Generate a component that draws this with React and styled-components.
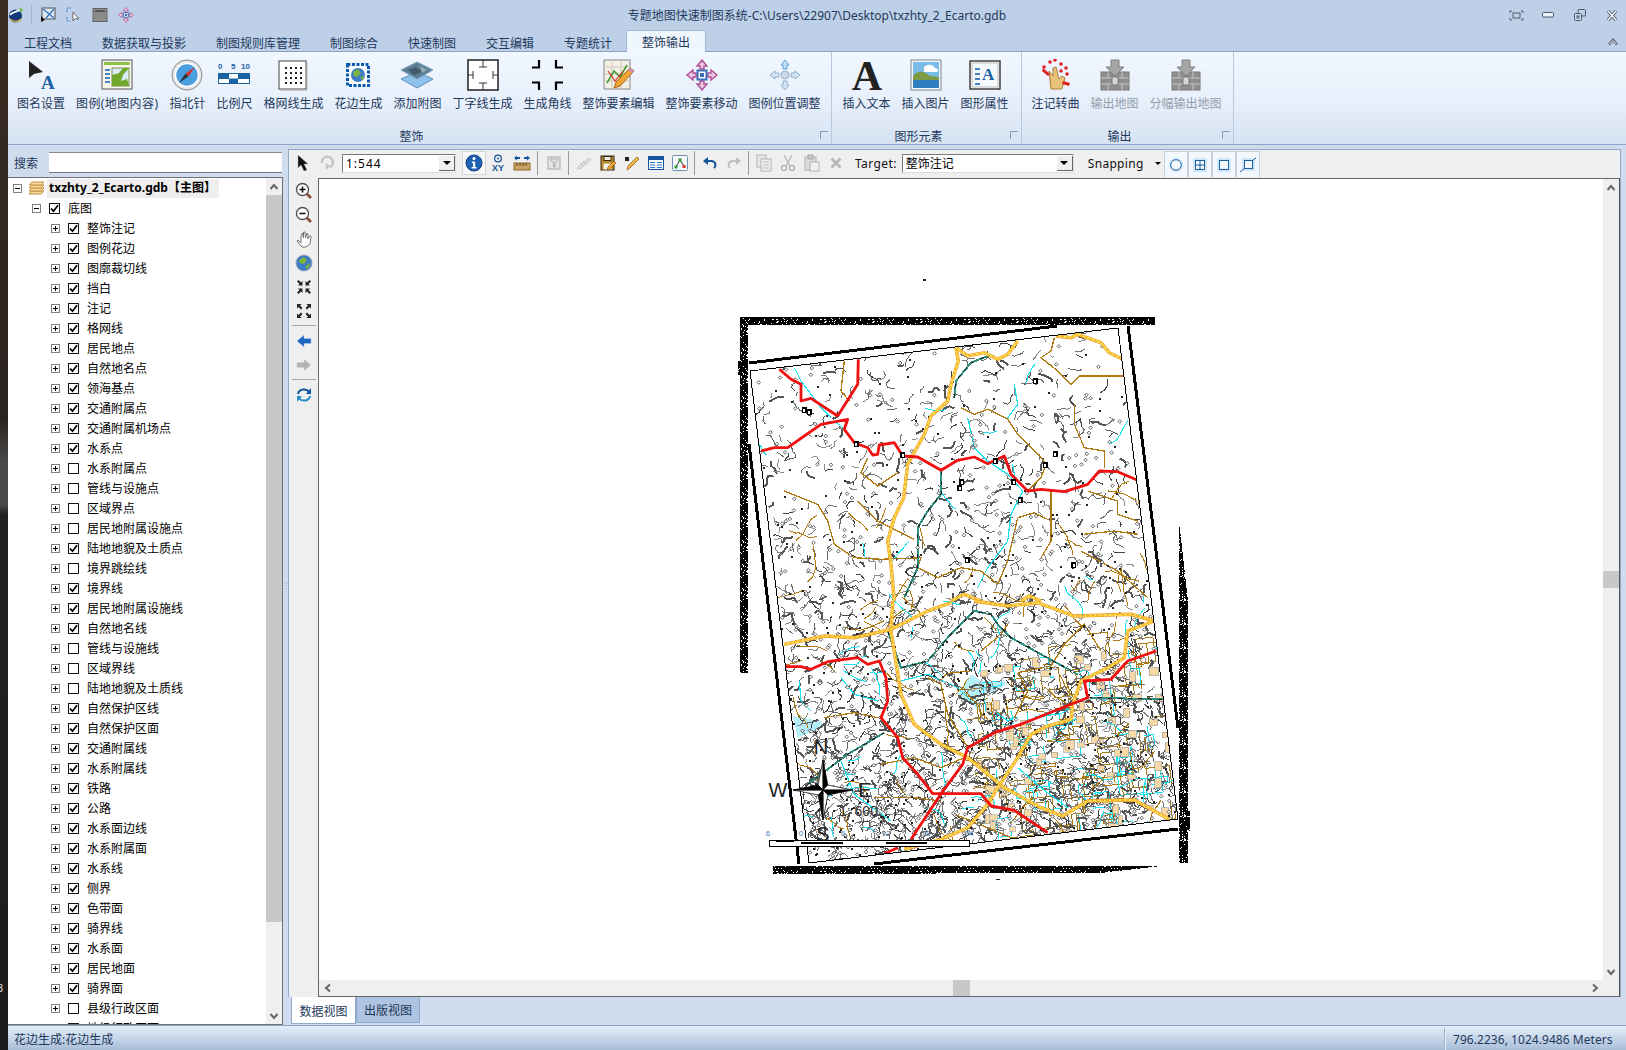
import React, { useMemo } from 'react';
import styled, { createGlobalStyle } from 'styled-components';

const Global = createGlobalStyle`
  html, body { margin: 0; padding: 0; background: #2a2420; }
  body { font-family: "Noto Sans", "Noto Sans CJK SC", sans-serif; font-size: 12px; }
  * { box-sizing: border-box; }
`;

const CJK = `"Noto Sans", "Noto Sans CJK SC", sans-serif`;
const INK = '#1e395b';

const Page = styled.div`
  width: 1626px;
  height: 1050px;
  display: flex;
  overflow: hidden;
`;
const DesktopEdge = styled.div`
  width: 8px;
  flex: none;
  display: flex;
  flex-direction: column;
  justify-content: flex-end;
  overflow: hidden;
  padding-bottom: 56px;
  color: #ddd;
  font-size: 11px;
  line-height: 12px;
  text-indent: -3px;
  background: linear-gradient(180deg, #3a2c22 0, #2a2420 40%, #4a4a4a 44%, #4a4a4a 48%, #222 49%, #1c1c1c 100%);
`;
const Window = styled.div`
  flex: 1;
  min-width: 0;
  display: flex;
  flex-direction: column;
  background: #cfdcee;
  font-family: ${CJK};
`;
const TitleBar = styled.div`
  height: 30px;
  flex: none;
  display: grid;
  grid-template-columns: 1fr auto 1fr;
  align-items: center;
  background: #bdd0e8;
`;
const QuickAccess = styled.div`
  display: flex;
  align-items: center;
`;
const QuickSlot = styled.div`
  width: ${(p) => p.$width || 26}px;
  height: 22px;
  display: flex;
  align-items: center;
  justify-content: center;
`;
const QuickDivider = styled.div`
  width: 1px;
  height: 20px;
  margin: 0 3px 0 7px;
  background: #e8f0fa;
  border-left: 1px solid #9db2cf;
`;
const Title = styled.div`
  color: ${INK};
  font-size: 12px;
  white-space: nowrap;
`;
const WindowButtons = styled.div`
  display: flex;
  justify-content: flex-end;
  margin-right: -2px;
`;
const WindowButton = styled.div`
  width: 32px;
  height: 20px;
  display: flex;
  align-items: center;
  justify-content: center;
`;
const TabStrip = styled.div`
  height: 22px;
  flex: none;
  display: flex;
  align-items: flex-end;
  justify-content: space-between;
  padding: 0 5px 0 1px;
  background: #bdd0e8;
  border-bottom: 1px solid #8ba4c6;
`;
const Tabs = styled.div`
  display: flex;
  align-items: flex-end;
`;
const Tab = styled.div`
  padding: 0 15px;
  height: ${(p) => (p.$active ? '22px' : '21px')};
  line-height: ${(p) => (p.$active ? '23px' : '25px')};
  color: ${INK};
  white-space: nowrap;
  margin-bottom: ${(p) => (p.$active ? '-1px' : '0')};
  background: ${(p) => (p.$active ? '#f0f6fe' : 'transparent')};
  border: 1px solid ${(p) => (p.$active ? '#9fb4d0' : 'transparent')};
  border-bottom: none;
  border-radius: 2px 2px 0 0;
  margin-left: -1px;
  margin-right: -1px;
`;
const Collapse = styled.div`
  width: 16px;
  height: 18px;
  display: flex;
  align-items: center;
  justify-content: center;
`;
const Ribbon = styled.div`
  height: 93px;
  flex: none;
  display: flex;
  background: linear-gradient(180deg, #f1f7ff 0, #e8f0fb 50%, #d6e2f2 100%);
  border-bottom: 1px solid #8ba4c6;
`;
const RibbonGroup = styled.div`
  width: ${(p) => p.$width}px;
  flex: none;
  display: flex;
  flex-direction: column;
  padding-left: ${(p) => p.$pad}px;
  border-right: 1px solid #b8c9df;
`;
const GroupItems = styled.div`
  flex: 1;
  display: flex;
`;
const RibbonItem = styled.div`
  padding: 5px 5.5px 0;
  display: flex;
  flex-direction: column;
  align-items: center;
`;
const RibbonIcon = styled.div`
  height: 38px;
  padding-bottom: 2px;
  display: flex;
  align-items: center;
  justify-content: center;
`;
const RibbonLabel = styled.div`
  line-height: 18px;
  white-space: nowrap;
  color: ${(p) => (p.$disabled ? '#939eab' : INK)};
  letter-spacing: ${(p) => p.$track || 0};
`;
const GroupFooter = styled.div`
  height: 18px;
  margin-left: -${(p) => p.$pad}px;
  padding-right: 16px;
  display: flex;
  align-items: center;
  justify-content: center;
  color: ${INK};
  position: relative;
  top: 1px;
`;
const Launcher = styled.span`
  position: absolute;
  right: 3px;
  top: 4px;
  width: 8px;
  height: 8px;
  border-left: 1px solid #8a9bb3;
  border-top: 1px solid #8a9bb3;
`;
const Workspace = styled.div`
  flex: 1;
  min-height: 0;
  display: flex;
`;
const LeftPanel = styled.div`
  width: 275px;
  flex: none;
  display: flex;
  flex-direction: column;
  padding-top: 4px;
`;
const SearchRow = styled.div`
  height: 28px;
  flex: none;
  display: flex;
  padding: 3px 1px 4px 6px;
  align-items: stretch;
`;
const SearchLabel = styled.div`
  width: 35px;
  line-height: 23px;
  color: ${INK};
`;
const SearchInput = styled.div`
  flex: 1;
  background: #fff;
  border-top: 1px solid #8a8a8a;
  border-bottom: 1px solid #777;
`;
const TreePanel = styled.div`
  flex: 1;
  min-height: 0;
  display: flex;
  background: #fff;
  border: 1px solid #707070;
  border-left: none;
`;
const TreeList = styled.div`
  flex: 1;
  overflow: hidden;
`;
const TreeRow = styled.div`
  height: 20px;
  display: flex;
  align-items: center;
  padding-left: ${(p) => p.$indent}px;
  color: #000;
  white-space: nowrap;
`;
const Expander = styled.span`
  width: 9px;
  height: 9px;
  flex: none;
  border: 1px solid #808080;
  position: relative;
  margin-right: ${(p) => p.$gap}px;
  &::before {
    content: '';
    position: absolute;
    left: 1px;
    top: 3px;
    width: 5px;
    height: 1px;
    background: #000;
  }
  &::after {
    content: '';
    display: ${(p) => (p.$open ? 'none' : 'block')};
    position: absolute;
    left: 3px;
    top: 1px;
    width: 1px;
    height: 5px;
    background: #000;
  }
`;
const CheckBox = styled.span`
  width: 11px;
  height: 11px;
  flex: none;
  border: 1px solid #111;
  margin-right: 8px;
  background: #fff;
  display: flex;
  align-items: center;
  justify-content: center;
`;
const RootLabel = styled.div`
  margin-left: 2px;
  padding: 0 8px 0 2px;
  height: 19px;
  line-height: 18px;
  background: #eeeeee;
  font-weight: 700;
  font-size: 12px;
  width: 172px;
`;
const VBar = styled.div`
  width: 16px;
  flex: none;
  display: flex;
  flex-direction: column;
  background: ${(p) => p.$bg || '#efefef'};
`;
const BarButton = styled.div`
  width: 16px;
  height: 17px;
  flex: none;
  display: flex;
  align-items: center;
  justify-content: center;
  background: #efefef;
`;
const TreeThumb = styled.div`
  height: 727px;
  flex: none;
  background: #c8c8c8;
`;
const BarTrack = styled.div`
  flex: 1;
  display: flex;
  flex-direction: ${(p) => (p.$row ? 'row' : 'column')};
  align-items: center;
  justify-content: center;
`;
const CanvasThumb = styled.div`
  background: #c8c8c8;
  width: ${(p) => (p.$row ? '17px' : '16px')};
  height: ${(p) => (p.$row ? '16px' : '17px')};
`;
const Splitter = styled.div`
  width: 5px;
  flex: none;
  display: flex;
  align-items: center;
  justify-content: center;
  color: #8ea3bf;
  font-size: 8px;
  line-height: 4px;
  text-align: center;
`;
const MainColumn = styled.div`
  width: 1333px;
  flex: none;
  display: flex;
  flex-direction: column;
  padding-top: 4px;
`;
const MainPanel = styled.div`
  flex: 1;
  min-height: 0;
  display: flex;
  flex-direction: column;
  background: #efefef;
  border: 1px solid #8fa9cc;
  border-bottom: none;
`;
const ToolRow = styled.div`
  height: 28px;
  flex: none;
  display: flex;
  align-items: center;
  padding: 0 0 2px 2px;
`;
const ToolSlot = styled.div`
  width: 24px;
  height: 24px;
  flex: none;
  display: flex;
  align-items: center;
  justify-content: center;
  ${(p) => p.$active && 'background: #f8f8f8; border: 1px solid #d6d6d6;'}
`;
const ToolSep = styled.div`
  width: 1px;
  height: 24px;
  flex: none;
  margin: 0 ${(p) => p.$after || 2.5}px 0 2.5px;
  background: #9a9a9a;
`;
const Combo = styled.div`
  width: ${(p) => p.$width}px;
  height: 19px;
  flex: none;
  margin: ${(p) => p.$margin};
  display: flex;
  align-items: center;
  background: #fff;
  color: #000;
  border: 1px solid #7a7a7a;
  border-bottom-color: #ddd;
  border-right-color: #ddd;
  padding-left: 3px;
  letter-spacing: ${(p) => p.$track || 0};
`;
const ComboText = styled.span`
  flex: 1;
`;
const ComboArrow = styled.span`
  width: 16px;
  height: 15px;
  flex: none;
  background: #efefef;
  border-right: 1px solid #666;
  border-bottom: 1px solid #666;
  display: flex;
  align-items: center;
  justify-content: center;
  &::after {
    content: '';
    border-left: 4px solid transparent;
    border-right: 4px solid transparent;
    border-top: 4px solid #000;
  }
`;
const ToolText = styled.div`
  color: #111;
  white-space: nowrap;
  margin: ${(p) => p.$margin};
  font-size: ${(p) => p.$size || 12}px;
  letter-spacing: ${(p) => p.$track || 0};
`;
const DropCaret = styled.span`
  margin: 0 3px 0 11px;
  border-left: 3px solid transparent;
  border-right: 3px solid transparent;
  border-top: 3px solid #000;
`;
const SnapButton = styled.div`
  width: 24px;
  height: 26px;
  flex: none;
  margin-bottom: -2px;
  display: flex;
  align-items: center;
  justify-content: center;
  background: #f3f8fd;
  border: 1px solid #c6cfda;
  border-bottom: none;
`;
const MainBody = styled.div`
  flex: 1;
  min-height: 0;
  display: flex;
`;
const SideTools = styled.div`
  width: 29px;
  flex: none;
  display: flex;
  flex-direction: column;
  align-items: center;
  padding-top: 1px;
`;
const SideSep = styled.div`
  width: 24px;
  height: 1px;
  flex: none;
  margin: 2px 0 3px;
  background: #a8a8a8;
`;
const Canvas = styled.div`
  flex: 1;
  min-width: 0;
  display: flex;
  flex-direction: column;
  border: 1px solid #666;
  border-right-color: #555;
  background: #fff;
`;
const CanvasRow = styled.div`
  flex: 1;
  min-height: 0;
  display: flex;
`;
const MapArea = styled.div`
  flex: 1;
  min-width: 0;
  overflow: hidden;
  background: #fff;
`;
const HBar = styled.div`
  height: 16px;
  flex: none;
  display: flex;
  align-items: center;
  background: #efefef;
`;
const HBarButton = styled.div`
  width: 17px;
  height: 16px;
  flex: none;
  display: flex;
  align-items: center;
  justify-content: center;
`;
const HBarCorner = styled.div`
  width: 16px;
  flex: none;
`;
const ViewTabs = styled.div`
  height: 28px;
  flex: none;
  display: flex;
  align-items: flex-start;
  padding-left: 3px;
`;
const ViewTab = styled.div`
  height: ${(p) => (p.$active ? '27px' : '26px')};
  line-height: ${(p) => (p.$active ? '29px' : '27px')};
  padding: 0 ${(p) => (p.$active ? '7.5px' : '7px')};
  color: ${INK};
  background: ${(p) => (p.$active ? '#fff' : '#aec4e0')};
  border: 1px solid #8fa9cc;
  border-top: none;
  white-space: nowrap;
`;
const StatusBar = styled.div`
  height: 25px;
  flex: none;
  display: flex;
  align-items: center;
  justify-content: space-between;
  padding: 2px 0 0 6px;
  color: ${INK};
  background: linear-gradient(180deg, #e4edf8 0, #d3e0f0 30%, #a9bed9 100%);
  border-top: 1px solid #8ba4c6;
`;
const StatusRight = styled.div`
  display: flex;
  align-items: center;
  height: 100%;
  width: 182px;
  padding-left: 8px;
  border-left: 1px solid #9fb3cd;
  box-shadow: inset 1px 0 0 #e6eef8;
  white-space: nowrap;
  letter-spacing: 0.05px;
`;

/* ---- small icons ---- */
const Chevron = ({ dir = 'up', color = '#666', size = 10 }) => {
  const r = { up: 0, right: 90, down: 180, left: 270 }[dir];
  return (
    <svg width={size} height={size} viewBox="0 0 10 10">
      <path d="M1.5 7 L5 3 L8.5 7" fill="none" stroke={color} strokeWidth="2" transform={`rotate(${r} 5 5)`} />
    </svg>
  );
};
const Tick = () => (
  <svg width="9" height="9" viewBox="0 0 9 9">
    <path d="M1 4.5 L3.5 7.2 L8 1.2" fill="none" stroke="#000" strokeWidth="1.7" />
  </svg>
);
const LogoIcon = () => (
  <svg width="16" height="16" viewBox="0 0 16 16">
    <circle cx="7.5" cy="9" r="6.5" fill="#123a7a" />
    <path d="M2 8 C5 4 10 5 14 2" stroke="#fff" strokeWidth="1.6" fill="none" />
    <path d="M11 1 L15 2 L13 6 Z" fill="#6cb33f" />
    <path d="M2 12 C6 15 10 15 13 12" stroke="#e2b04a" strokeWidth="1.3" fill="none" />
  </svg>
);
const QaMapIcon = () => (
  <svg width="16" height="16" viewBox="0 0 16 16">
    <rect x="2" y="1" width="13" height="11" fill="#dfe6ee" stroke="#555" />
    <path d="M3 2 L14 11 M14 2 L6 11" stroke="#3b79c4" strokeWidth="1.4" />
    <path d="M1 9 L1 15 L5 13 Z" fill="#111" />
  </svg>
);
const QaSelectIcon = () => (
  <svg width="16" height="16" viewBox="0 0 16 16">
    <path d="M1 5 V1 H5 M1 10 V14 H4" stroke="#3b79c4" fill="none" strokeDasharray="2 1" />
    <path d="M7 5 L7 14 L9.5 11.5 L13 12 Z" fill="#fff" stroke="#666" />
  </svg>
);
const QaWindowIcon = () => (
  <svg width="16" height="16" viewBox="0 0 16 16">
    <rect x="1" y="1.5" width="14" height="13" fill="#8c8c8c" stroke="#666" />
    <rect x="3" y="3" width="10" height="2" fill="#555" />
  </svg>
);
const QaMoveIcon = () => <MoveArrows size={16} fill="#b04f97" center="#3a6db5" />;
const WinFocus = () => (
  <svg width="15" height="11" viewBox="0 0 15 11">
    <rect x="4" y="3" width="7" height="5" fill="none" stroke="#555d70" />
    <path d="M1 3 V1 H3 M12 1 H14 V3 M14 8 V10 H12 M3 10 H1 V8" fill="none" stroke="#555d70" />
  </svg>
);
const WinMin = () => (
  <svg width="12" height="6" viewBox="0 0 12 6">
    <rect x="0.5" y="0.5" width="11" height="4.5" rx="1" fill="#eef3fa" stroke="#4f5a6e" />
  </svg>
);
const WinRestore = () => (
  <svg width="12" height="12" viewBox="0 0 12 12">
    <rect x="4" y="0.5" width="7.5" height="6.5" rx="1" fill="none" stroke="#4f5a6e" />
    <rect x="0.5" y="4.5" width="7" height="7" rx="1" fill="#c6d6ec" stroke="#4f5a6e" />
    <rect x="3" y="7" width="2" height="2" fill="none" stroke="#4f5a6e" />
  </svg>
);
const WinClose = () => (
  <svg width="12" height="11" viewBox="0 0 12 11">
    <path d="M2 1 L10 10 M10 1 L2 10" stroke="#4f5a6e" strokeWidth="3.2" />
    <path d="M2 1 L10 10 M10 1 L2 10" stroke="#f5f8fc" strokeWidth="1.4" />
  </svg>
);
const CollapseIcon = () => (
  <svg width="10" height="8" viewBox="0 0 10 8">
    <path d="M1 6.5 L5 2 L9 6.5" fill="none" stroke="#4f5a6e" strokeWidth="2.6" />
    <path d="M1.5 6 L5 2.4 L8.5 6" fill="none" stroke="#fff" strokeWidth="1" />
  </svg>
);
const LayersSmall = () => (
  <svg width="17" height="14" viewBox="0 0 17 14">
    {[9, 6, 3, 0].map((o) => (
      <path key={o} d={`M4 ${o + 1} H16 L13 ${o + 4} H1 Z`} fill="#f3d9a0" stroke="#c58f3c" />
    ))}
  </svg>
);

/* ribbon icons */
const NameIcon = () => (
  <svg width="32" height="32" viewBox="0 0 32 32">
    <path d="M4 2 L4 19 L9 15 L18 13 Z" fill="#222" />
    <text x="16" y="30" fontFamily="Liberation Serif" fontWeight="700" fontSize="19" fill="#1a63a3">A</text>
  </svg>
);
const LegendIcon = () => (
  <svg width="32" height="32" viewBox="0 0 32 32">
    <rect x="1" y="1" width="30" height="29" fill="#f8f6ea" stroke="#555" />
    <rect x="3" y="3" width="26" height="3" fill="#8bc34a" />
    <rect x="11" y="9" width="17" height="18" fill="#dcecf6" stroke="#7b8b55" />
    <path d="M11 27 V16 L18 14 L22 9 H28 L22 16 L20 22 L26 20 L28 27 Z" fill="#70a82e" />
    {[10, 14, 18, 22].map((y) => <rect key={y} x="4" y={y} width="5" height="2" fill="#3f83c9" />)}
  </svg>
);
const CompassIcon = () => (
  <svg width="32" height="32" viewBox="0 0 32 32">
    <circle cx="16" cy="16" r="15" fill="#e7e7e7" stroke="#8a8a8a" />
    <circle cx="16" cy="16" r="11.5" fill="#4a9fe0" stroke="#fff" strokeWidth="1.5" />
    <path d="M24 8 L17.5 17.5 L14.5 14.5 Z" fill="#d8342c" />
    <path d="M8 24 L17.5 17.5 L14.5 14.5 Z" fill="#333" />
  </svg>
);
const ScaleIcon = () => (
  <svg width="34" height="32" viewBox="0 0 34 32">
    <text x="1" y="10" fontFamily="Liberation Sans" fontWeight="700" fontSize="8" fill="#1a63a3">0</text>
    <text x="14" y="10" fontFamily="Liberation Sans" fontWeight="700" fontSize="8" fill="#1a63a3">5</text>
    <text x="24" y="10" fontFamily="Liberation Sans" fontWeight="700" fontSize="8" fill="#1a63a3">10</text>
    <rect x="1" y="14" width="32" height="11" fill="#1a63a3" />
    <rect x="12" y="15" width="9" height="4.5" fill="#fff" />
    <rect x="2" y="20" width="10" height="4" fill="#fff" />
    <rect x="21" y="20" width="11" height="4" fill="#fff" />
  </svg>
);
const GridIcon = () => (
  <svg width="30" height="32" viewBox="0 0 30 32">
    <rect x="1" y="2" width="27" height="28" fill="#fff" stroke="#444" />
    <path d="M29 3 V31 H2" fill="none" stroke="#aaa" />
    {[7, 12, 17, 22].flatMap((x) => [8, 13, 18, 23].map((y) => <rect key={`${x}-${y}`} x={x} y={y} width="2" height="2" fill="#222" />))}
  </svg>
);
const BorderIcon = () => (
  <svg width="24" height="24" viewBox="0 0 24 24">
    <rect x="1.5" y="1.5" width="21" height="21" fill="#fff" stroke="#0a5bb0" strokeWidth="3" strokeDasharray="3 1.5" />
    <circle cx="12" cy="12" r="7" fill="#3d7cc4" />
    <path d="M7 9 L12 6 L15 10 L11 14 L8 13 Z M14 15 L18 12 L17 17 Z" fill="#7bb33c" />
  </svg>
);
const InsetIcon = () => (
  <svg width="34" height="28" viewBox="0 0 34 28">
    <path d="M17 11 L33 18 L17 27 L1 18 Z" fill="#8ec2ea" stroke="#5a90bf" />
    <path d="M17 1 L33 9 L17 18 L1 9 Z" fill="#5c7f95" stroke="#7fa5c0" />
    <path d="M8 9 L16 6 L22 11 L14 14 Z" fill="#3f5a6a" />
    <path d="M20 5 L27 9 L22 12 Z" fill="#94a9b5" />
  </svg>
);
const TickFrameIcon = () => (
  <svg width="32" height="32" viewBox="0 0 32 32">
    <rect x="1" y="1" width="30" height="30" fill="#fff" stroke="#111" strokeWidth="1.4" />
    <path d="M16 1 V8 M12 8 H20 M16 31 V24 M12 24 H20 M1 16 H6 M6 12 V20 M31 16 H26 M26 12 V20" stroke="#333" fill="none" />
  </svg>
);
const CornersIcon = () => (
  <svg width="33" height="32" viewBox="0 0 33 32">
    <path d="M8 1 V8.5 H1 M25 1 V8.5 H32 M1 23.5 H8 V31 M32 23.5 H25 V31" fill="none" stroke="#000" strokeWidth="2.2" />
  </svg>
);
const DecorEditIcon = () => (
  <svg width="32" height="32" viewBox="0 0 32 32">
    <rect x="1" y="1" width="26" height="29" fill="#f2efe6" stroke="#888" />
    <path d="M1 8 H27 M1 15 H27 M1 22 H27 M9 1 V30 M18 1 V30" stroke="#cfc9bb" />
    <path d="M4 24 L11 12 L17 18 L24 6" fill="none" stroke="#3f9a35" strokeWidth="1.5" />
    <path d="M5 12 L12 22 L20 12" fill="none" stroke="#d8342c" strokeWidth="1.2" />
    <path d="M11 29 L13 23 L27 9 L31 12 L17 27 Z" fill="#f0a630" stroke="#a8661a" />
    <path d="M27 9 L31 12 L29 14 L25 11 Z" fill="#d88ab8" />
  </svg>
);
const MoveArrows = ({ size = 32, fill = '#b04f97', center = '#3a6db5', light = '#e9c9df' }) => (
  <svg width={size} height={size} viewBox="0 0 32 32">
    <path d="M16 1 L21 7 H18 V10 H14 V7 H11 Z M16 31 L21 25 H18 V22 H14 V25 H11 Z M1 16 L7 11 V14 H10 V18 H7 V21 Z M31 16 L25 11 V14 H22 V18 H25 V21 Z" fill={light} stroke={fill} strokeWidth="1.4" />
    <rect x="11.5" y="11.5" width="9" height="9" fill="#fff" stroke={center} strokeWidth="2" />
    <rect x="14" y="14" width="4" height="4" fill={center} />
  </svg>
);
const MoveSoftIcon = () => (
  <svg width="32" height="32" viewBox="0 0 32 32">
    <path d="M16 1 L20 6 H18 V10 H14 V6 H12 Z" fill="#bfe0f7" stroke="#5ca0d5" />
    <path d="M16 31 L20 26 H18 V22 H14 V26 H12 Z M1 16 L6 12 V14 H10 V18 H6 V20 Z M31 16 L26 12 V14 H22 V18 H26 V20 Z" fill="#d7e5f2" stroke="#8fb2d2" />
    <circle cx="16" cy="16" r="4" fill="#cdd9e5" stroke="#9fb2c6" />
  </svg>
);
const BigA = () => (
  <svg width="32" height="34" viewBox="0 0 32 34">
    <text x="16" y="32" textAnchor="middle" fontFamily="Liberation Serif" fontWeight="700" fontSize="42" fill="#222">A</text>
  </svg>
);
const PictureIcon = () => (
  <svg width="32" height="32" viewBox="0 0 32 32">
    <rect x="1" y="1" width="30" height="30" fill="#f4f6f8" stroke="#7b8694" />
    <rect x="3" y="3" width="26" height="26" fill="#79bce8" />
    <path d="M14 8 C18 4 24 6 25 9 C28 9 29 12 27 13 H14 Z" fill="#fff" />
    <path d="M3 17 C8 11 14 12 20 17 L29 18 V21 H3 Z" fill="#7d9a45" />
    <rect x="3" y="21" width="26" height="8" fill="#2f7fc0" />
  </svg>
);
const PropsIcon = () => (
  <svg width="32" height="30" viewBox="0 0 32 30">
    <rect x="1" y="1" width="30" height="28" fill="#fff" stroke="#333" strokeWidth="1.4" />
    <rect x="3" y="3" width="26" height="24" fill="#f6f9fc" stroke="#bbb" />
    {[8, 13, 18, 23].map((y) => <rect key={y} x="6" y={y} width="5" height="2" fill="#3f83c9" />)}
    <text x="13" y="20" fontFamily="Liberation Serif" fontWeight="700" fontSize="17" fill="#1a63a3">A</text>
  </svg>
);
const HandIcon = () => (
  <svg width="30" height="32" viewBox="0 0 30 32">
    <path d="M8 12 L10 30 H21 L24 19 L21 17 L18 20 L15 8 L12 9 L12 17 Z" fill="#e9c27a" stroke="#a8803c" />
    {[[3, 8], [9, 3], [14, 1], [20, 5], [25, 9], [20, 12], [26, 15]].map(([x, y]) => <circle key={x * y} cx={x} cy={y} r="1.8" fill="#e02020" />)}
    <path d="M2 9 L9 15 L7 17 L1 12 Z M22 22 L29 24 L28 27 L21 25 Z" fill="#e02020" />
  </svg>
);
const ExportIcon = () => (
  <svg width="30" height="32" viewBox="0 0 30 32">
    <rect x="1" y="13" width="28" height="18" fill="#8f8f8f" stroke="#777" />
    <path d="M1 19 H29 M1 25 H29 M8 13 V19 M22 13 V19 M8 25 V31 M22 25 V31" stroke="#c6c6c6" />
    <rect x="12" y="18" width="6" height="8" fill="#d8d8d8" stroke="#777" />
    <path d="M11 1 H19 V8 H24 L15 17 L6 8 H11 Z" fill="#a6a6a6" stroke="#808080" />
  </svg>
);

/* tool icons */
const ArrowTool = () => (
  <svg width="16" height="18" viewBox="0 0 16 18">
    <path d="M3 1 L3 14 L6 11 L9 17 L12 16 L9 10 L13 10 Z" fill="#111" stroke="#aaa" strokeWidth="0.5" />
  </svg>
);
const RotateTool = () => (
  <svg width="16" height="16" viewBox="0 0 16 16">
    <path d="M3 8 A5.5 5.5 0 1 1 11 12" fill="none" stroke="#c4c4c4" strokeWidth="2.4" />
    <path d="M7 15 V8 L11 11 Z" fill="#c4c4c4" />
  </svg>
);
const InfoTool = () => (
  <svg width="18" height="18" viewBox="0 0 18 18">
    <circle cx="9" cy="9" r="8" fill="#1d5fb3" stroke="#123f85" />
    <circle cx="9" cy="4.6" r="1.5" fill="#fff" />
    <path d="M6.8 7.5 H10.2 V13 H11.5 V14.4 H6.6 V13 H8 V9 H6.8 Z" fill="#fff" />
  </svg>
);
const XyTool = () => (
  <svg width="18" height="18" viewBox="0 0 18 18">
    <circle cx="9" cy="4.5" r="3.4" fill="none" stroke="#14549c" strokeWidth="1.2" />
    <circle cx="9" cy="4.5" r="1" fill="#14549c" />
    <text x="9" y="17" textAnchor="middle" fontFamily="Liberation Sans" fontWeight="700" fontSize="9" fill="#14549c">XY</text>
  </svg>
);
const RulerTool = () => (
  <svg width="18" height="18" viewBox="0 0 18 18">
    <path d="M1 4 L4 1.5 V3 H7 V5 H4 V6.5 Z M17 4 L14 1.5 V3 H11 V5 H14 V6.5 Z" fill="#14549c" />
    <rect x="1" y="9" width="16" height="7" fill="#c9a465" stroke="#8b6a2f" />
    <path d="M4 9 V12 M7 9 V12 M10 9 V12 M13 9 V12" stroke="#5a4218" />
  </svg>
);
const FilterTool = () => (
  <svg width="14" height="14" viewBox="0 0 14 14">
    <rect x="1" y="1" width="12" height="12" fill="#e4e4e4" stroke="#aaa" />
    <path d="M3 3 H11 L8 7 V11 H6.5 V7 Z" fill="none" stroke="#aaa" />
  </svg>
);
const SketchTool = () => (
  <svg width="18" height="14" viewBox="0 0 18 14">
    <path d="M2 12 L14 2 L16 4 L5 13 Z" fill="#e2e2e2" stroke="#c4c4c4" />
    <path d="M5 7 L8 10 M8 5 L11 8" stroke="#bbb" />
  </svg>
);
const SaveTool = () => (
  <svg width="16" height="16" viewBox="0 0 16 16">
    <rect x="1" y="1" width="13" height="14" fill="#b78a2d" stroke="#3a2b10" />
    <rect x="4" y="1.5" width="7" height="4" fill="#f4efe0" stroke="#3a2b10" />
    <rect x="3.5" y="8.5" width="8" height="6" fill="#f4efe0" />
    <path d="M7 15 L8 12 L14 6 L16 8 L10 14 Z" fill="#f0a630" stroke="#7a4e12" strokeWidth="0.6" />
  </svg>
);
const PencilTool = () => (
  <svg width="16" height="16" viewBox="0 0 16 16">
    <rect x="1" y="2" width="4" height="4" fill="#222" />
    <path d="M3 15 L4 11 L13 2 L15 4 L6 13 Z" fill="#f0b53c" stroke="#8a5f1a" strokeWidth="0.7" />
  </svg>
);
const TableTool = () => (
  <svg width="16" height="14" viewBox="0 0 16 14">
    <rect x="0.5" y="0.5" width="15" height="13" fill="#fff" stroke="#14549c" />
    <rect x="1" y="1" width="14" height="3" fill="#14549c" />
    <path d="M2 6.5 H7 M9 6.5 H14 M2 9 H7 M9 9 H14 M2 11.5 H7 M9 11.5 H14" stroke="#2a74c6" />
  </svg>
);
const NodesTool = () => (
  <svg width="16" height="16" viewBox="0 0 16 16">
    <rect x="0.5" y="0.5" width="15" height="15" rx="1" fill="#f6fafd" stroke="#6b8fb0" />
    <path d="M4 12 L8 5 L12 11" fill="none" stroke="#333" />
    <rect x="2.5" y="10.5" width="3" height="3" fill="#2c9a34" />
    <rect x="6.5" y="3.5" width="3" height="3" fill="#2c9a34" />
    <rect x="10.5" y="10" width="3" height="3" fill="#d8342c" />
  </svg>
);
const UndoTool = ({ color = '#14549c', flip }) => (
  <svg width="16" height="14" viewBox="0 0 16 14">
    <g transform={flip ? 'translate(16 0) scale(-1 1)' : undefined}>
      <path d="M3 5 H10 A4 4 0 0 1 12 12" fill="none" stroke={color} strokeWidth="2" />
      <path d="M6 1 L1 5 L6 9 Z" fill={color} />
    </g>
  </svg>
);
const CopyTool = () => (
  <svg width="16" height="18" viewBox="0 0 16 18">
    <rect x="1" y="1" width="9" height="12" fill="#e8e8e8" stroke="#b4b4b4" />
    <rect x="5" y="5" width="10" height="12" fill="#efefef" stroke="#b4b4b4" />
    <path d="M7 8 H13 M7 11 H13 M7 14 H13" stroke="#bbb" />
  </svg>
);
const CutTool = () => (
  <svg width="16" height="18" viewBox="0 0 16 18">
    <path d="M4 1 L10 12 M12 1 L6 12" stroke="#bcbcbc" strokeWidth="1.5" />
    <circle cx="4" cy="14" r="2.5" fill="none" stroke="#b4b4b4" strokeWidth="1.4" />
    <circle cx="12" cy="14" r="2.5" fill="none" stroke="#b4b4b4" strokeWidth="1.4" />
  </svg>
);
const PasteTool = () => (
  <svg width="16" height="18" viewBox="0 0 16 18">
    <rect x="1" y="3" width="11" height="13" fill="#dcdcdc" stroke="#b0b0b0" />
    <rect x="4" y="1" width="5" height="4" fill="#c8c8c8" stroke="#aaa" />
    <rect x="6" y="8" width="9" height="9" fill="#efefef" stroke="#b4b4b4" />
  </svg>
);
const DeleteTool = () => (
  <svg width="14" height="14" viewBox="0 0 14 14">
    <path d="M2.5 2.5 L11.5 11.5 M11.5 2.5 L2.5 11.5" stroke="#b8b8b8" strokeWidth="3" />
  </svg>
);
const SnapCircle = () => (
  <svg width="16" height="16" viewBox="0 0 16 16">
    <circle cx="8" cy="8" r="7" fill="#cfe6f8" />
    <circle cx="8" cy="8" r="5.3" fill="#f3f8fd" stroke="#1f5e9c" />
  </svg>
);
const SnapGrid = () => (
  <svg width="16" height="16" viewBox="0 0 16 16">
    <rect x="1" y="1" width="14" height="14" fill="#cfe6f8" />
    <rect x="3.5" y="3.5" width="9" height="9" fill="#f3f8fd" stroke="#1f5e9c" />
    <path d="M8 3.5 V12.5 M3.5 8 H12.5" stroke="#1f5e9c" />
  </svg>
);
const SnapBox = () => (
  <svg width="16" height="16" viewBox="0 0 16 16">
    <rect x="1" y="1" width="14" height="14" fill="#cfe6f8" />
    <rect x="3.5" y="3.5" width="9" height="9" fill="#f3f8fd" stroke="#1f5e9c" />
  </svg>
);
const SnapEdge = () => (
  <svg width="18" height="16" viewBox="0 0 18 16">
    <rect x="3" y="1" width="13" height="13" fill="#cfe6f8" />
    <rect x="5.5" y="3.5" width="8" height="8" fill="#f3f8fd" stroke="#1f5e9c" />
    <path d="M1 15 L6 11 M13 4 L17 1" stroke="#1f5e9c" />
  </svg>
);
const ZoomTool = ({ minus }) => (
  <svg width="18" height="18" viewBox="0 0 18 18">
    <path d="M11 11 L16 16" stroke="#8a4a32" strokeWidth="2.6" />
    <circle cx="7.5" cy="7.5" r="6" fill="#fff" stroke="#555" strokeWidth="1.4" />
    <path d={minus ? 'M4.5 7.5 H10.5' : 'M4.5 7.5 H10.5 M7.5 4.5 V10.5'} stroke="#111" strokeWidth="1.6" />
  </svg>
);
const HandTool = () => (
  <svg width="18" height="18" viewBox="0 0 18 18">
    <path d="M3 10 L6 13 V6 L7.5 3 L8.5 8 V2 H10 L10.5 8 L12 3 L13 4 L12.8 9 L15 5.5 L16 6.5 L15 14 L11 17 H7 L2 11 Z" fill="#fff" stroke="#666" strokeWidth="0.9" />
  </svg>
);
const GlobeTool = () => (
  <svg width="18" height="18" viewBox="0 0 18 18">
    <circle cx="9" cy="9" r="8" fill="#3d7cc4" stroke="#9ab" />
    <path d="M4 6 L9 3 L12 6 L9 10 L5 9 Z M11 12 L15 9 L14 14 L11 15 Z" fill="#7bb33c" />
  </svg>
);
const FourArrows = ({ out }) => {
  const arrow = out ? 'M1 1 H5.5 L4 2.5 L6.5 5 L5 6.5 L2.5 4 L1 5.5 Z' : 'M6.5 6.5 H2 L3.5 5 L1 2.5 L2.5 1 L5 3.5 L6.5 2 Z';
  return (
    <svg width="16" height="16" viewBox="0 0 16 16">
      {[0, 90, 180, 270].map((deg) => <path key={deg} d={arrow} fill="#222" transform={`rotate(${deg} 8 8)`} />)}
    </svg>
  );
};
const BackTool = ({ gray }) => (
  <svg width="16" height="14" viewBox="0 0 16 14">
    <g transform={gray ? 'translate(16 0) scale(-1 1)' : undefined}>
      <path d="M1 7 L8 1 V4.5 H15 V9.5 H8 V13 Z" fill={gray ? '#b4b4b4' : '#1d63c0'} stroke={gray ? '#d6d6d6' : '#a6c4ea'} strokeWidth="0.6" />
    </g>
  </svg>
);
const RefreshTool = () => (
  <svg width="16" height="16" viewBox="0 0 16 16">
    <path d="M2 7 A6 5.5 0 0 1 13 5" fill="none" stroke="#14549c" strokeWidth="2" />
    <path d="M14 9 A6 5.5 0 0 1 3 11" fill="none" stroke="#2a8cc6" strokeWidth="2" />
    <path d="M15 1 V7 H10 Z" fill="#14549c" />
    <path d="M1 15 V9 H6 Z" fill="#2a8cc6" />
  </svg>
);

/* ---- the map drawing, in page coordinates ---- */
const z6 = (pts) => pts.map(([x, y]) => [720 + x / 3, 300 + y / 3]);
const z7 = (pts) => pts.map(([x, y]) => [740 + x / 3, 600 + y / 3]);
const toPath = (pts) => pts.map(([x, y], i) => `${i ? 'L' : 'M'}${x.toFixed(1)} ${y.toFixed(1)}`).join('');

const RED_ROADS = [
  z6([[175, 205], [210, 235], [240, 250], [240, 300], [270, 292], [350, 345]]),
  z6([[350, 345], [410, 250], [412, 175]]),
  z6([[120, 450], [160, 440], [200, 440], [250, 405], [300, 370], [380, 355], [370, 385], [400, 425], [440, 440], [455, 462], [470, 460], [475, 432], [520, 425], [545, 465], [590, 468], [660, 508], [710, 478], [760, 468], [800, 488], [850, 465], [870, 520], [920, 570], [960, 565], [1030, 572], [1100, 550], [1135, 510], [1190, 512], [1248, 537]]),
  z7([[135, 197], [180, 197], [210, 205], [260, 182], [350, 170], [380, 190], [415, 180], [435, 230], [440, 300], [420, 350], [470, 410], [485, 470], [530, 520], [575, 578], [600, 578], [720, 578], [750, 615], [820, 628], [920, 695]]),
  z7([[600, 578], [665, 490], [680, 440], [760, 395], [840, 370], [990, 310], [1040, 290], [1030, 240], [1110, 235], [1160, 180], [1245, 150]]),
  z7([[600, 578], [510, 715]]),
  z7([[470, 740], [430, 758]]),
];
const YELLOW_ROADS = [
  z6([[705, 140], [712, 180], [690, 250], [680, 300], [630, 345], [610, 400], [560, 490], [548, 590], [520, 650], [500, 720], [510, 790], [520, 900]]),
  z6([[705, 140], [740, 165], [790, 155], [830, 175], [860, 160], [890, 120]]),
  z6([[1005, 105], [1050, 110], [1070, 100], [1140, 125], [1165, 155], [1205, 175]]),
  z6([[690, 900], [730, 880], [780, 900]]),
  z6([[900, 900], [925, 885], [960, 900]]),
  z7([[455, 0], [450, 90], [480, 280], [520, 370], [600, 430], [680, 470], [790, 560], [900, 620], [965, 645], [1040, 600], [1180, 597], [1285, 655]]),
  z7([[130, 130], [250, 105], [340, 110], [450, 85], [560, 30], [630, 5]]),
  z7([[700, 0], [800, 15], [890, 5], [1000, 45], [1170, 40], [1240, 60]]),
  z7([[1240, 60], [1160, 90], [1150, 170], [1100, 200], [1020, 240], [995, 310], [990, 355], [920, 375], [870, 400], [830, 470], [770, 560], [740, 610], [680, 680], [600, 715], [490, 745]]),
];
const TEAL_LINES = [
  z6([[700, 290], [705, 240], [750, 185], [800, 165]]),
  z6([[660, 510], [660, 580], [620, 630], [590, 680], [590, 800], [550, 890]]),
  z7([[440, 90], [480, 200], [560, 180], [620, 110], [700, 30], [750, 40], [770, 70], [810, 110], [900, 160], [1010, 220]]),
  z7([[430, 395], [320, 460], [200, 550]]),
  z7([[1040, 290], [1270, 295]]),
];
const BROWN_LINES = [
  z6([[190, 570], [240, 590], [290, 610], [320, 660], [340, 730], [400, 770], [480, 775], [600, 770], [590, 800], [650, 830], [720, 800], [780, 810], [830, 850], [860, 780], [890, 650]]),
  z6([[410, 600], [470, 660], [510, 680], [580, 715]]),
  z6([[720, 320], [760, 340], [800, 325], [860, 355], [890, 400], [960, 470], [975, 490], [960, 530], [920, 570]]),
  z6([[1000, 110], [990, 150], [960, 170], [1010, 210], [1050, 250], [1075, 225], [1210, 225]]),
  z6([[1060, 310], [1060, 370], [1090, 440], [1150, 450], [1150, 500]]),
  z6([[1100, 570], [1190, 600], [1190, 640], [1250, 660]]),
  z6([[890, 650], [940, 635], [990, 660], [990, 570]]),
  z6([[990, 660], [990, 720], [960, 770]]),
  z6([[1090, 700], [1180, 690], [1250, 700]]),
  z6([[1080, 750], [1190, 810], [1280, 890]]),
  z6([[440, 470], [420, 515], [470, 555], [530, 515]]),
  z6([[370, 180], [360, 270], [385, 300]]),
  z7([[720, 150], [780, 100], [800, 70]]),
  z7([[830, 215], [930, 195], [970, 130], [1030, 70], [1080, 150]]),
  z7([[830, 215], [860, 270], [820, 350]]),
  z7([[560, 230], [600, 250], [620, 340], [680, 440]]),
  z7([[250, 350], [340, 335], [410, 350]]),
  z7([[420, 490], [520, 470], [600, 500], [670, 470]]),
  z7([[400, 590], [520, 590], [600, 600]]),
  z7([[640, 640], [740, 680], [810, 710]]),
];
const CYAN_LINES = [
  z6([[220, 200], [240, 240], [300, 320], [330, 350]]),
  z6([[740, 350], [760, 440], [800, 480], [860, 520], [905, 570], [870, 640], [860, 720], [800, 800], [770, 860]]),
  z6([[880, 250], [890, 310], [860, 350]]),
  z7([[300, 230], [340, 280], [410, 300]]),
  z7([[175, 240], [180, 300], [210, 330]]),
  z7([[480, 240], [560, 220], [650, 260], [690, 300]]),
  z7([[760, 330], [800, 360], [820, 350]]),
  z7([[830, 500], [900, 560], [980, 620]]),
  z7([[300, 480], [340, 580], [450, 660]]),
];
const LAKES = [
  z7([[690, 220], [720, 240], [800, 245], [770, 270], [710, 290], [720, 335], [680, 300], [650, 280]]),
  z7([[155, 345], [240, 360], [245, 380], [170, 410]]),
];
const MARKERS = z6([[250, 328], [265, 332], [405, 428], [545, 463], [822, 480], [722, 542], [716, 562], [878, 542], [897, 598], [942, 240], [972, 492], [1002, 460], [738, 778], [1058, 792]]);

const TL = [749, 370];
const TR = [1117, 327];
const BR = [1177, 818];
const BL = [808, 862];
const onMap = (u, v) => [0, 1].map((k) => TL[k] * (1 - u) * (1 - v) + TR[k] * u * (1 - v) + BR[k] * u * v + BL[k] * (1 - u) * v);

const seeded = (seed) => () => {
  seed = (seed + 0x6d2b79f5) | 0;
  let t = Math.imul(seed ^ (seed >>> 15), 1 | seed);
  t = (t + Math.imul(t ^ (t >>> 7), 61 | t)) ^ t;
  return ((t ^ (t >>> 14)) >>> 0) / 4294967296;
};

const buildMap = () => {
  const r = seeded(22907);
  const walk = (start, steps, len, wander) => {
    const pts = [start];
    let a = r() * Math.PI * 2;
    for (let i = 0; i < steps; i++) {
      a += (r() - 0.5) * wander;
      const l = len * (0.5 + r());
      const [x, y] = pts[pts.length - 1];
      pts.push([x + Math.cos(a) * l, y + Math.sin(a) * l]);
    }
    return pts;
  };
  const pick = () => {
    for (;;) {
      const u = r();
      const v = r();
      if (r() < 0.16 + 0.84 * v * v) return [u, v];
    }
  };
  const gray = [];
  const GRAYS = ['#555', '#777', '#444', '#8c8c8c', '#666'];
  for (let i = 0; i < 1900; i++) {
    const [u, v] = pick();
    gray.push({ d: toPath(walk(onMap(u, v), 2 + Math.floor(r() * 3), 4, 2.4)), c: GRAYS[i % 5], w: i % 5 === 0 ? 2 : 1 });
  }
  const cyan = [];
  for (let i = 0; i < 55; i++) {
    const [u, v] = pick();
    cyan.push(toPath(walk(onMap(u, v), 2 + Math.floor(r() * 4), 6, 1.2)));
  }
  const brown = [];
  for (let i = 0; i < 70; i++) {
    const u = r();
    const v = 0.3 + r() * 0.7;
    brown.push(toPath(walk(onMap(u, v), 3 + Math.floor(r() * 3), 7, 1.1)));
  }
  // orthogonal lanes of the built-up part, lower right
  const lanes = [];
  for (let i = 0; i < 110; i++) {
    let u = 0.5 + r() * 0.5;
    let v = 0.64 + r() * 0.36;
    const pts = [onMap(u, v)];
    for (let k = 0; k < 4; k++) {
      if (k % 2) u += (r() - 0.5) * 0.14;
      else v += (r() - 0.5) * 0.1;
      pts.push(onMap(u, v));
    }
    lanes.push({ d: toPath(pts), c: i % 3 === 0 ? '#19e3f0' : '#a87a14' });
  }
  const blobs = [];
  for (let i = 0; i < 75; i++) {
    const u = 0.48 + r() * 0.52;
    const v = 0.64 + r() * 0.36;
    const [x, y] = onMap(u, v);
    blobs.push({ x, y, w: 4 + r() * 6, h: 4 + r() * 6 });
  }
  const rings = [];
  for (let i = 0; i < 760; i++) {
    const [u, v] = pick();
    rings.push(onMap(u, v));
  }
  const specks = [];
  for (let i = 0; i < 420; i++) {
    const [u, v] = pick();
    specks.push(onMap(u, v));
  }
  return { gray, cyan, brown, lanes, blobs, rings, specks };
};

const Noise = () => {
  const cells = useMemo(() => {
    const r = seeded(7);
    const out = [];
    for (let i = 0; i < 130; i++) out.push([Math.floor(r() * 48), Math.floor(r() * 24)]);
    return out;
  }, []);
  return (
    <pattern id="speckle" width="48" height="24" patternUnits="userSpaceOnUse">
      <rect width="48" height="24" fill="#000" />
      {cells.map(([x, y], i) => <rect key={i} x={x} y={y} width="1" height="1" fill="#fff" />)}
    </pattern>
  );
};

const polar = (cx, cy, a, d) => [cx + Math.sin(a) * d, cy - Math.cos(a) * d];

// eight-point star: each point is split in a black and a white facet
const star = (cx, cy) => {
  const shapes = [];
  [0, 90, 180, 270].forEach((deg) => {
    const a = (deg * Math.PI) / 180;
    const diag = a + Math.PI / 4;
    const waistL = polar(cx, cy, a - Math.PI / 4, 7);
    const waistR = polar(cx, cy, diag, 7);
    const tip = polar(cx, cy, a, 30);
    shapes.push(<path key={`l${deg}`} d={`${toPath([[cx, cy], tip, waistL])}Z`} fill="#fff" stroke="#000" strokeWidth="0.7" />);
    shapes.push(<path key={`r${deg}`} d={`${toPath([[cx, cy], tip, waistR])}Z`} fill="#000" stroke="#000" strokeWidth="0.7" />);
    const t2 = polar(cx, cy, diag, 15);
    shapes.push(<path key={`d${deg}`} d={`${toPath([[cx, cy], t2, waistR])}Z`} fill="#000" />);
  });
  return shapes;
};

const MapDrawing = () => {
  const m = useMemo(buildMap, []);
  const quad = [TL, TR, BR, BL].map((p) => p.join(',')).join(' ');
  return (
    <svg width="1286" height="803" viewBox="318 178 1286 803" shapeRendering="crispEdges" style={{ display: 'block' }}>
      <defs>
        <Noise />
        <clipPath id="mapclip"><polygon points={quad} /></clipPath>
      </defs>
      <g clipPath="url(#mapclip)">
        {LAKES.map((l, i) => <polygon key={i} points={l.map((p) => p.join(',')).join(' ')} fill="#b5effa" />)}
        {m.lanes.map((l, i) => <path key={i} d={l.d} fill="none" stroke={l.c} strokeWidth="1" />)}
        {m.gray.map((g, i) => <path key={i} d={g.d} fill="none" stroke={g.c} strokeWidth={g.w} />)}
        {m.blobs.map((b, i) => <rect key={i} x={b.x} y={b.y} width={b.w} height={b.h} fill="#f6d9a6" stroke="#999" strokeWidth="0.6" />)}
        {m.cyan.map((d, i) => <path key={i} d={d} fill="none" stroke="#19e3f0" strokeWidth="1" />)}
        {CYAN_LINES.map((l, i) => <path key={i} d={toPath(l)} fill="none" stroke="#19e3f0" strokeWidth="1.2" />)}
        {m.brown.map((d, i) => <path key={i} d={d} fill="none" stroke="#b07a10" strokeWidth="1" />)}
        {BROWN_LINES.map((l, i) => <path key={i} d={toPath(l)} fill="none" stroke="#b07a10" strokeWidth="1.3" />)}
        {TEAL_LINES.map((l, i) => (
          <g key={i}>
            <path d={toPath(l)} fill="none" stroke="#2f8f80" strokeWidth="2" />
            <path d={toPath(l)} fill="none" stroke="#222" strokeWidth="1" strokeDasharray="4 6" />
          </g>
        ))}
        {m.specks.map(([x, y], i) => <rect key={i} x={x} y={y} width="2" height="2" fill="#222" />)}
        {m.rings.map(([x, y], i) => (
          <path key={i} d={`M${x} ${y - 1.8} L${x + 1.8} ${y} L${x} ${y + 1.8} L${x - 1.8} ${y} Z`} fill="#fff" stroke="#222" strokeWidth="0.7" shapeRendering="auto" />
        ))}
        {YELLOW_ROADS.map((l, i) => (
          <g key={i} shapeRendering="auto">
            <path d={toPath(l)} fill="none" stroke="#e8921e" strokeWidth="3.4" />
            <path d={toPath(l)} fill="none" stroke="#ffe84d" strokeWidth="2.2" />
            <path d={toPath(l)} fill="none" stroke="#ef6a2a" strokeWidth="0.6" strokeDasharray="3 2" />
          </g>
        ))}
        {RED_ROADS.map((l, i) => <path key={i} d={toPath(l)} fill="none" stroke="#f01010" strokeWidth="2.8" strokeLinejoin="round" shapeRendering="auto" />)}
        {MARKERS.map(([x, y], i) => (
          <g key={i}>
            <rect x={x - 2.5} y={y - 3} width="5" height="6" fill="#000" />
            <rect x={x - 1} y={y - 1} width="2" height="3" fill="#fff" />
          </g>
        ))}
      </g>
      <polygon points={quad} fill="none" stroke="#000" strokeWidth="1" />

      <path d="M748 362 L1056 325 M1127 325 L1177 727 M748 443 L798 863 M1177 828 L873 863" fill="none" stroke="#000" strokeWidth="3" />

      <rect x="739" y="316" width="415" height="8" fill="url(#speckle)" />
      <rect x="739" y="316" width="8" height="356" fill="url(#speckle)" />
      <rect x="737" y="360" width="6" height="14" fill="url(#speckle)" />
      <polygon points="1178,520 1187,600 1187,862 1178,862" fill="url(#speckle)" />
      <rect x="1180" y="810" width="9" height="20" fill="url(#speckle)" />
      <polygon points="772,865 1160,865 1100,872 772,873" fill="url(#speckle)" />
      <rect x="922" y="278" width="3" height="2" fill="#222" />
      <rect x="995" y="878" width="4" height="1" fill="#222" />

      <g shapeRendering="geometricPrecision">{star(822, 789)}</g>
      <g fontFamily="Liberation Sans" shapeRendering="geometricPrecision">
        <text x="820" y="753" textAnchor="middle" fontSize="20" fill="#222">N</text>
        <text x="777" y="796" textAnchor="middle" fontSize="20" fill="#222">W</text>
        <text x="864" y="796" textAnchor="middle" fontSize="20" fill="#222">E</text>
        <text x="822" y="840" textAnchor="middle" fontSize="20" fill="#222">S</text>
        <text x="838" y="815" fontSize="14" fill="#333">1: 600</text>
        {[[767, '6'], [800, '0'], [842, '6'], [885, '12'], [925, '18'], [968, '24']].map(([x, t]) => (
          <text key={x} x={x} y="835" textAnchor="middle" fontSize="8" fill="#4477aa">{t}</text>
        ))}
      </g>
      <rect x="768" y="839" width="200" height="6" fill="#fff" stroke="#000" strokeWidth="1" />
      <path d="M775 840 H793 M800 842 H842 M885 842 H926" stroke="#000" strokeWidth="2.4" fill="none" />
    </svg>
  );
};

/* ---- data ---- */
const TABS = ['工程文档', '数据获取与投影', '制图规则库管理', '制图综合', '快速制图', '交互编辑', '专题统计', '整饰输出'];
const RIBBON = [
  {
    name: '整饰', width: 824, pad: 3.5,
    items: [
      ['图名设置', NameIcon], ['图例(地图内容)', LegendIcon, false, '0.4px'], ['指北针', CompassIcon], ['比例尺', ScaleIcon],
      ['格网线生成', GridIcon], ['花边生成', BorderIcon], ['添加附图', InsetIcon], ['丁字线生成', TickFrameIcon],
      ['生成角线', CornersIcon], ['整饰要素编辑', DecorEditIcon], ['整饰要素移动', MoveArrows], ['图例位置调整', MoveSoftIcon],
    ],
  },
  {
    name: '图形元素', width: 190, pad: 5,
    items: [['插入文本', BigA], ['插入图片', PictureIcon], ['图形属性', PropsIcon]],
  },
  {
    name: '输出', width: 212, pad: 4,
    items: [['注记转曲', HandIcon], ['输出地图', ExportIcon, true], ['分幅输出地图', ExportIcon, true]],
  },
];
const LAYERS = [
  ['整饰注记', 1], ['图例花边', 1], ['图廓裁切线', 1], ['挡白', 1], ['注记', 1], ['格网线', 1], ['居民地点', 1], ['自然地名点', 1],
  ['领海基点', 1], ['交通附属点', 1], ['交通附属机场点', 1], ['水系点', 1], ['水系附属点', 0], ['管线与设施点', 0], ['区域界点', 0],
  ['居民地附属设施点', 0], ['陆地地貌及土质点', 1], ['境界跳绘线', 0], ['境界线', 1], ['居民地附属设施线', 1], ['自然地名线', 1],
  ['管线与设施线', 0], ['区域界线', 0], ['陆地地貌及土质线', 0], ['自然保护区线', 1], ['自然保护区面', 1], ['交通附属线', 1],
  ['水系附属线', 1], ['铁路', 1], ['公路', 1], ['水系面边线', 1], ['水系附属面', 1], ['水系线', 1], ['侧界', 1], ['色带面', 1],
  ['骑界线', 1], ['水系面', 1], ['居民地面', 1], ['骑界面', 1], ['县级行政区面', 0], ['地级行政区面', 0],
];

const App = () => (
  <Page>
    <Global />
    <DesktopEdge>3</DesktopEdge>
    <Window>
      <TitleBar>
        <QuickAccess>
          <QuickSlot $width={16}><LogoIcon /></QuickSlot>
          <QuickDivider />
          <QuickSlot><QaMapIcon /></QuickSlot>
          <QuickSlot><QaSelectIcon /></QuickSlot>
          <QuickSlot><QaWindowIcon /></QuickSlot>
          <QuickSlot><QaMoveIcon /></QuickSlot>
        </QuickAccess>
        <Title>专题地图快速制图系统-C:\Users\22907\Desktop\txzhty_2_Ecarto.gdb</Title>
        <WindowButtons>
          <WindowButton><WinFocus /></WindowButton>
          <WindowButton><WinMin /></WindowButton>
          <WindowButton><WinRestore /></WindowButton>
          <WindowButton><WinClose /></WindowButton>
        </WindowButtons>
      </TitleBar>
      <TabStrip>
        <Tabs>
          {TABS.map((t) => <Tab key={t} $active={t === '整饰输出'}>{t}</Tab>)}
        </Tabs>
        <Collapse><CollapseIcon /></Collapse>
      </TabStrip>
      <Ribbon>
        {RIBBON.map((g) => (
          <RibbonGroup key={g.name} $width={g.width} $pad={g.pad}>
            <GroupItems>
              {g.items.map(([label, Icon, disabled, track]) => (
                <RibbonItem key={label}>
                  <RibbonIcon><Icon /></RibbonIcon>
                  <RibbonLabel $disabled={disabled} $track={track}>{label}</RibbonLabel>
                </RibbonItem>
              ))}
            </GroupItems>
            <GroupFooter $pad={g.pad}>{g.name}<Launcher /></GroupFooter>
          </RibbonGroup>
        ))}
      </Ribbon>
      <Workspace>
        <LeftPanel>
          <SearchRow>
            <SearchLabel>搜索</SearchLabel>
            <SearchInput />
          </SearchRow>
          <TreePanel>
            <TreeList>
              <TreeRow $indent={5}>
                <Expander $open $gap={6} />
                <LayersSmall />
                <RootLabel>txzhty_2_Ecarto.gdb【主图】</RootLabel>
              </TreeRow>
              <TreeRow $indent={24}>
                <Expander $open $gap={8} />
                <CheckBox><Tick /></CheckBox>
                底图
              </TreeRow>
              {LAYERS.map(([name, on]) => (
                <TreeRow key={name} $indent={43}>
                  <Expander $gap={8} />
                  <CheckBox>{on ? <Tick /> : null}</CheckBox>
                  {name}
                </TreeRow>
              ))}
            </TreeList>
            <VBar>
              <BarButton><Chevron dir="up" /></BarButton>
              <TreeThumb />
              <BarTrack />
              <BarButton><Chevron dir="down" /></BarButton>
            </VBar>
          </TreePanel>
        </LeftPanel>
        <Splitter>⋮</Splitter>
        <MainColumn>
          <MainPanel>
            <ToolRow>
              <ToolSlot><ArrowTool /></ToolSlot>
              <ToolSlot><RotateTool /></ToolSlot>
              <Combo $width={114} $margin="0 6px 0 3px" $track="1px"><ComboText>1:544</ComboText><ComboArrow /></Combo>
              <ToolSlot $active><InfoTool /></ToolSlot>
              <ToolSlot><XyTool /></ToolSlot>
              <ToolSlot><RulerTool /></ToolSlot>
              <ToolSep $after={4} />
              <ToolSlot><FilterTool /></ToolSlot>
              <ToolSep />
              <ToolSlot><SketchTool /></ToolSlot>
              <ToolSlot><SaveTool /></ToolSlot>
              <ToolSlot><PencilTool /></ToolSlot>
              <ToolSlot><TableTool /></ToolSlot>
              <ToolSlot><NodesTool /></ToolSlot>
              <ToolSep />
              <ToolSlot><UndoTool /></ToolSlot>
              <ToolSlot><UndoTool flip color="#c0c0c0" /></ToolSlot>
              <ToolSep />
              <ToolSlot><CopyTool /></ToolSlot>
              <ToolSlot><CutTool /></ToolSlot>
              <ToolSlot><PasteTool /></ToolSlot>
              <ToolSlot><DeleteTool /></ToolSlot>
              <ToolText $margin="0 5px 0 7.5px" $track="0.4px">Target:</ToolText>
              <Combo $width={172} $margin="0 14px 0 0"><ComboText>整饰注记</ComboText><ComboArrow /></Combo>
              <ToolText $margin="0" $track="0.3px">Snapping</ToolText>
              <DropCaret />
              <SnapButton><SnapCircle /></SnapButton>
              <SnapButton><SnapGrid /></SnapButton>
              <SnapButton><SnapBox /></SnapButton>
              <SnapButton><SnapEdge /></SnapButton>
            </ToolRow>
            <MainBody>
              <SideTools>
                <ToolSlot><ZoomTool /></ToolSlot>
                <ToolSlot><ZoomTool minus /></ToolSlot>
                <ToolSlot><HandTool /></ToolSlot>
                <ToolSlot><GlobeTool /></ToolSlot>
                <ToolSlot><FourArrows /></ToolSlot>
                <ToolSlot><FourArrows out /></ToolSlot>
                <SideSep />
                <ToolSlot><BackTool /></ToolSlot>
                <ToolSlot><BackTool gray /></ToolSlot>
                <SideSep />
                <ToolSlot><RefreshTool /></ToolSlot>
              </SideTools>
              <Canvas>
                <CanvasRow>
                  <MapArea><MapDrawing /></MapArea>
                  <VBar>
                    <BarButton><Chevron dir="up" /></BarButton>
                    <BarTrack><CanvasThumb /></BarTrack>
                    <BarButton><Chevron dir="down" /></BarButton>
                  </VBar>
                </CanvasRow>
                <HBar>
                  <HBarButton><Chevron dir="left" /></HBarButton>
                  <BarTrack $row><CanvasThumb $row /></BarTrack>
                  <HBarButton><Chevron dir="right" /></HBarButton>
                  <HBarCorner />
                </HBar>
              </Canvas>
            </MainBody>
          </MainPanel>
          <ViewTabs>
            <ViewTab $active>数据视图</ViewTab>
            <ViewTab>出版视图</ViewTab>
          </ViewTabs>
        </MainColumn>
      </Workspace>
      <StatusBar>
        花边生成:花边生成
        <StatusRight>796.2236, 1024.9486 Meters</StatusRight>
      </StatusBar>
    </Window>
  </Page>
);

export default App;
